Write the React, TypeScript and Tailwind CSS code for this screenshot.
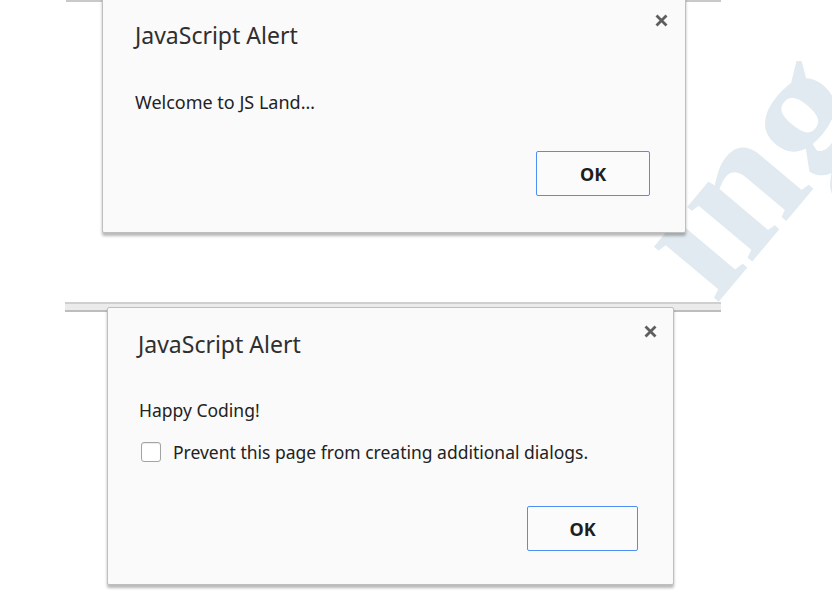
import React from "react";

const font = { fontFamily: '"Noto Sans", "Open Sans", sans-serif' };

function CloseIcon() {
  return (
    <svg width="13" height="13" viewBox="0 0 13 13" className="block">
      <path d="M1.5 1.5 L11.5 11.5 M11.5 1.5 L1.5 11.5" stroke="#5e5e5e" strokeWidth="2.8" strokeLinecap="butt" />
    </svg>
  );
}

function OkButton({ w }: { w: string }) {
  return (
    <button
      className={`${w} h-[45px] rounded-[2px] border border-[#4d8ff5] bg-[#fbfbfb] text-[18px] font-bold text-[#1e1e1e] leading-none`}
    >
      OK
    </button>
  );
}

export default function App() {
  return (
    <div className="relative w-[832px] h-[591px] overflow-hidden bg-white" style={font}>
      {/* watermark */}
      <span
        className="absolute left-[668px] top-[172px] origin-left -rotate-[50deg] text-[185px] font-bold leading-none text-[#e0eaf0] select-none"
        style={{ fontFamily: '"Liberation Serif", serif' }}
      >
        ing
      </span>

      <div className="relative flex flex-col">
        {/* first window */}
        <div className="ml-[66px] w-[655px]">
          <div className="h-[2px] bg-[#c9c9c9]" />
          <div className="relative ml-[36px] -mt-[6px] w-[584px] h-[237px] bg-[#fafafa] border border-[#bfbfbf] rounded-[2px] shadow-[0_3px_3px_rgba(0,0,0,0.28)] pl-[32px] pr-[35px]">
            <div className="absolute right-[17px] top-[17px]">
              <CloseIcon />
            </div>
            <div className="pt-[24px] text-[23px] leading-[28px] text-[#2f2f2f]">JavaScript Alert</div>
            <div className="mt-[41px] text-[18px] leading-[24px] text-[#222]">Welcome to JS Land…</div>
            <div className="mt-[37px] flex justify-end">
              <OkButton w="w-[114px]" />
            </div>
          </div>
        </div>

        {/* second window */}
        <div className="relative mt-[69px] ml-[65px] w-[767px] bg-white">
          <div className="w-[656px] h-[10px] bg-[#ebebeb] border-t-2 border-b-2 border-t-[#cfcfcf] border-b-[#bdbdbd]" />
          <div className="relative ml-[42px] -mt-[5px] w-[567px] h-[278px] bg-[#fafafa] border border-[#bfbfbf] rounded-[2px] shadow-[0_3px_3px_rgba(0,0,0,0.28)] pl-[30px] pr-[35px]">
            <div className="absolute right-[16px] top-[17px]">
              <CloseIcon />
            </div>
            <div className="pt-[22px] text-[23px] leading-[28px] text-[#2f2f2f]">JavaScript Alert</div>
            <div className="mt-[40px] pl-[1px] text-[17.5px] leading-[24px] text-[#222]">Happy Coding!</div>
            <label className="mt-[18px] flex items-center gap-[12px] pl-[3px]">
              <span className="w-[20px] h-[20px] rounded-[3px] border border-[#a3a3a3] bg-white shadow-[inset_0_1px_1px_rgba(0,0,0,0.08)]" />
              <span className="text-[17.5px] leading-[24px] text-[#222]">
                Prevent this page from creating additional dialogs.
              </span>
            </label>
            <div className="mt-[42px] flex justify-end">
              <OkButton w="w-[111px]" />
            </div>
          </div>
        </div>
      </div>
    </div>
  );
}
